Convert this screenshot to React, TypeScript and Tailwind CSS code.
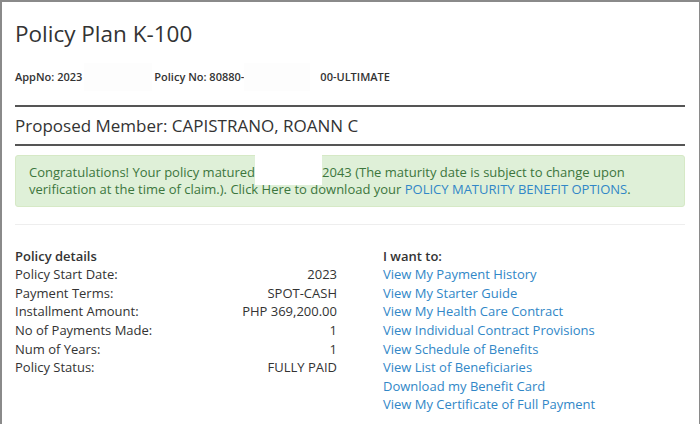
import React from "react";

const font = { fontFamily: '"Open Sans", "Noto Sans", sans-serif' };

const rows: [string, string][] = [
  ["Policy Start Date:", "2023"],
  ["Payment Terms:", "SPOT-CASH"],
  ["Installment Amount:", "PHP 369,200.00"],
  ["No of Payments Made:", "1"],
  ["Num of Years:", "1"],
  ["Policy Status:", "FULLY PAID"],
];

const links = [
  "View My Payment History",
  "View My Starter Guide",
  "View My Health Care Contract",
  "View Individual Contract Provisions",
  "View Schedule of Benefits",
  "View List of Beneficiaries",
  "Download my Benefit Card",
  "View My Certificate of Full Payment",
];

export default function App() {
  return (
    <div
      style={font}
      className="w-[700px] h-[424px] overflow-hidden bg-white border-t-2 border-l-2 border-r border-[#8a8a8a] pl-[13px] pr-[14px] text-[#333]"
    >
      <h1 className="mt-[20px] text-[22.5px] leading-[1.1] text-[#333]">Policy Plan K-100</h1>
      <div className="mt-[16px] flex items-center text-[11px] font-semibold text-[#333] h-[28px]">
        <span>AppNo: 2023</span>
        <span className="w-[68px] h-[28px] bg-[#fdfdfd] ml-[2px]" />
        <span className="ml-[2px]">Policy No: 80880-</span>
        <span className="w-[66px] h-[28px] bg-[#fdfdfd]" />
        <span className="ml-[10px]">00-ULTIMATE</span>
      </div>
      <div className="mt-[14px] border-t-2 border-[#555]" />
      <div className="h-[37px] flex items-center text-[17px] text-[#333]">
        Proposed Member: CAPISTRANO, ROANN C
      </div>
      <div className="border-t-2 border-[#555]" />
      <div className="mt-[9px] rounded-[3px] bg-[#dff0d8] border border-[#d6e9c6] px-[13px] py-[8px] text-[13px] leading-[17px] text-[#3c763d]">
        Congratulations! Your policy matured
        <span className="relative inline-block w-[67px] h-[17px] align-top">
          <span className="absolute left-0 -top-[9px] w-[67px] h-[30px] bg-white" />
        </span>
        2043 (The maturity date is subject to change upon verification at the time of claim.). Click Here to download your{" "}
        <span className="text-[#3187c7]">POLICY MATURITY BENEFIT OPTIONS</span>.
      </div>
      <div className="mt-[17px] border-t border-[#eee]" />
      <div className="mt-[22px] flex text-[13px] leading-[18.57px]">
        <div className="w-[322px]">
          <div className="font-semibold">Policy details</div>
          {rows.map(([k, v]) => (
            <div key={k} className="flex justify-between">
              <span>{k}</span>
              <span>{v}</span>
            </div>
          ))}
        </div>
        <div className="ml-[46px]">
          <div className="font-semibold">I want to:</div>
          {links.map((l) => (
            <div key={l} className="text-[#3187c7]">
              {l}
            </div>
          ))}
        </div>
      </div>
    </div>
  );
}
